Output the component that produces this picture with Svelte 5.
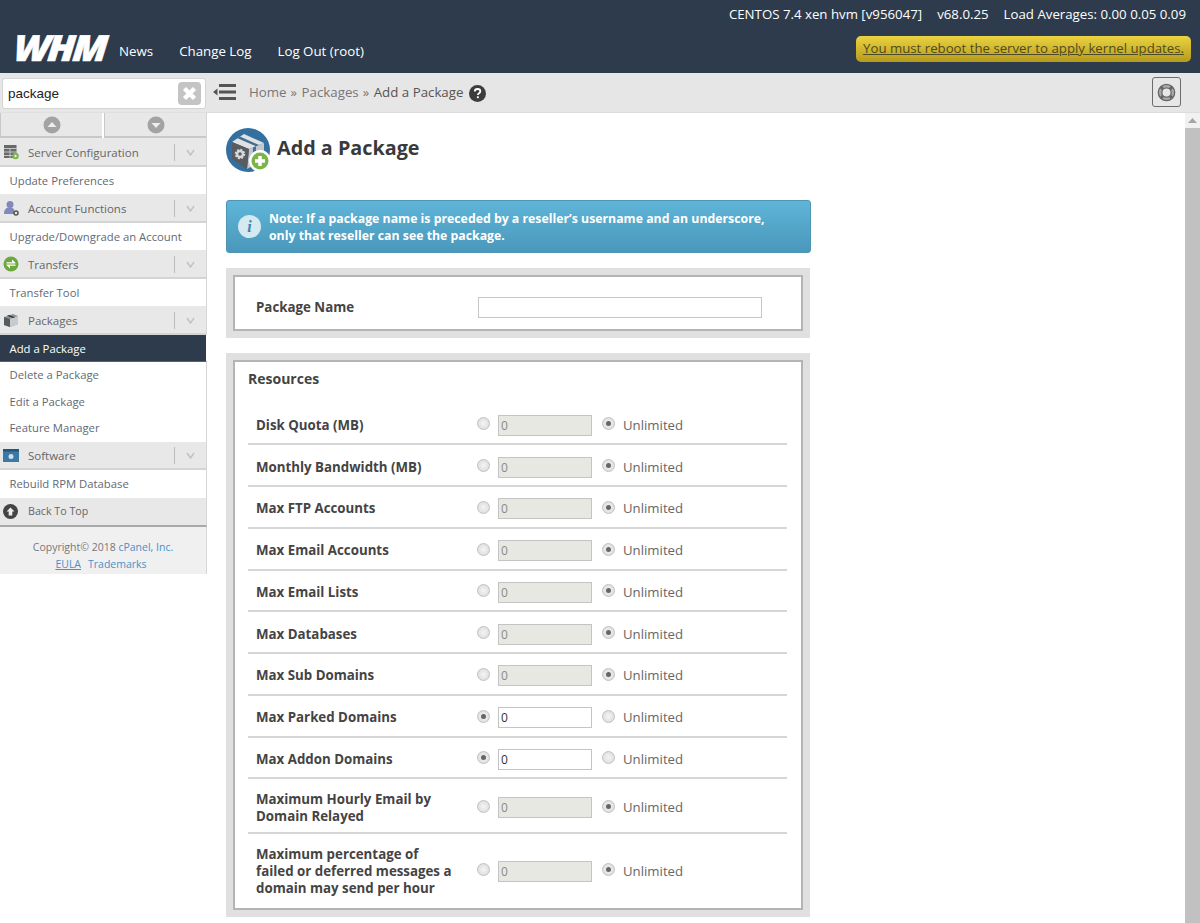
<script>
  const groups = [
    { name: 'Server Configuration', icon: 'server', items: ['Update Preferences'] },
    { name: 'Account Functions', icon: 'account', items: ['Upgrade/Downgrade an Account'] },
    { name: 'Transfers', icon: 'transfers', items: ['Transfer Tool'] },
    { name: 'Packages', icon: 'packages', items: ['Add a Package', 'Delete a Package', 'Edit a Package', 'Feature Manager'] },
    { name: 'Software', icon: 'software', items: ['Rebuild RPM Database'] }
  ];

  const resources = [
    { label: 'Disk Quota (MB)', unlimited: true },
    { label: 'Monthly Bandwidth (MB)', unlimited: true },
    { label: 'Max FTP Accounts', unlimited: true },
    { label: 'Max Email Accounts', unlimited: true },
    { label: 'Max Email Lists', unlimited: true },
    { label: 'Max Databases', unlimited: true },
    { label: 'Max Sub Domains', unlimited: true },
    { label: 'Max Parked Domains', unlimited: false },
    { label: 'Max Addon Domains', unlimited: false },
    { label: 'Maximum Hourly Email by Domain Relayed', unlimited: true, size: 'two' },
    { label: 'Maximum percentage of failed or deferred messages a domain may send per hour', unlimited: true, size: 'three' }
  ];
</script>

<div class="page">
  <header class="top">
    <div class="server-info">
      <span>CENTOS 7.4 xen hvm [v956047]</span>
      <span>v68.0.25</span>
      <span>Load Averages: 0.00 0.05 0.09</span>
    </div>
    <div class="top-main">
      <div class="logo">WHM</div>
      <nav class="top-nav">
        <a href="#news">News</a>
        <a href="#log">Change Log</a>
        <a href="#out">Log Out (root)</a>
      </nav>
      <a class="reboot" href="#reboot">You must reboot the server to apply kernel updates.</a>
    </div>
  </header>

  <div class="body">
    <aside class="side">
      <div class="search">
        <div class="search-box">
          <input type="text" value="package" />
          <span class="clear">
            <svg width="23" height="23" viewBox="0 0 23 23"><rect width="23" height="23" rx="4" fill="#c4c4c4" /><path d="M6.500 6.500l10 10M16.500 6.500l-10 10" stroke="#fff" stroke-width="4.500" /></svg>
          </span>
        </div>
      </div>
      <div class="arrows">
        <button aria-label="Up">
          <svg width="18" height="18" viewBox="0 0 18 18"><circle cx="9" cy="9" r="8.500" fill="#a3a3a3" /><path d="M4.500 11l4.500-5 4.500 5z" fill="#eee" /></svg>
        </button>
        <button aria-label="Down">
          <svg width="18" height="18" viewBox="0 0 18 18"><circle cx="9" cy="9" r="8.500" fill="#a3a3a3" /><path d="M4.500 7l4.500 5 4.500-5z" fill="#eee" /></svg>
        </button>
      </div>

      {#each groups as group}
        <div class="group-head">
          <span class="group-icon">
            {#if group.icon === 'server'}
              <svg width="16" height="16" viewBox="0 0 16 16"><rect x="1" y="1" width="12.500" height="13" fill="#666a69" /><path d="M1 4.500h12.500M1 8h12.500M1 11.500h12.500M7 4.500v10" stroke="#dcdcdc" stroke-width=".8" /><circle cx="12.500" cy="12" r="3.300" fill="#7cb54a" /><circle cx="12.500" cy="12" r="1.200" fill="#e8e8e8" /></svg>
            {:else if group.icon === 'account'}
              <svg width="16" height="16" viewBox="0 0 16 16"><circle cx="7" cy="4.500" r="3.500" fill="#8189bb" /><path d="M1 14c0-5 2-6.500 6-6.500 2 0 3 .5 4 2V14z" fill="#8189bb" /><circle cx="13" cy="13" r="2" fill="none" stroke="#555" stroke-width="1.500" /></svg>
            {:else if group.icon === 'transfers'}
              <svg width="16" height="16" viewBox="0 0 16 16"><circle cx="8" cy="8" r="7.500" fill="#6da83c" /><path d="M3.500 6.300h5.500V3.500l3.500 3.300v.8h-9zM12.500 9.700H7v2.800L3.500 9.200v-.8h9z" fill="#fff" /></svg>
            {:else if group.icon === 'packages'}
              <svg width="16" height="16" viewBox="0 0 16 16"><path d="M1 5l9-3 5 2v8l-8 3-6-2z" fill="#8f9599" /><path d="M7 7l8-3v8l-8 3z" fill="#c8cbcd" /><path d="M1 5l6 2v8l-6-2z" fill="#555a5e" /><path d="M4 3.800l6 2.300 2-.8-6-2.300z" fill="#333" /></svg>
            {:else}
              <svg width="16" height="14" viewBox="0 0 16 14"><rect width="16" height="13" fill="#3a7aa5" /><rect width="16" height="2.500" fill="#24557a" /><circle cx="8" cy="7.500" r="2.500" fill="#cfe0ea" /></svg>
            {/if}
          </span>
          <span class="group-name">{group.name}</span>
          <span class="chev">
            <svg width="9" height="7" viewBox="0 0 9 7"><path d="M1 1l3.500 5L8 1" fill="none" stroke="#c2c2c2" stroke-width="1.500" /></svg>
          </span>
        </div>
        {#each group.items as item}
          <a class="item" class:active={item === 'Add a Package'} href="#item">{item}</a>
        {/each}
      {/each}

      <div class="back">
        <svg width="15" height="15" viewBox="0 0 15 15"><circle cx="7.500" cy="7.500" r="7.500" fill="#444" /><path d="M3.500 7.500l4-4 4 4H9.300V11.500H5.700V7.500z" fill="#eee" /></svg>
        <span>Back To Top</span>
      </div>
      <div class="side-foot">
        <div>Copyright© 2018 <a href="#cp">cPanel, Inc.</a></div>
        <div class="legal"><a class="eula" href="#eula">EULA</a><a href="#tm">Trademarks</a></div>
      </div>
    </aside>

    <div class="right">
      <div class="crumbs">
        <svg class="menu-toggle" width="23" height="16" viewBox="0 0 23 16"><path d="M6 1.500h17M6 8h17M6 14.500h17" stroke="#555" stroke-width="3" /><path d="M0 8l4.500-3.500v7z" fill="#555" /></svg>
        <span class="crumb">Home</span><span class="sep">»</span>
        <span class="crumb">Packages</span><span class="sep">»</span>
        <span class="crumb current">Add a Package</span>
        <svg class="help" width="17" height="17" viewBox="0 0 17 17"><circle cx="8.500" cy="8.500" r="8.500" fill="#3d3d3d" /><path d="M5.800 6.500c0-1.700 1.200-2.500 2.700-2.500s2.800.9 2.800 2.300c0 2-2.400 1.900-2.400 3.700" fill="none" stroke="#fff" stroke-width="1.800" /><rect x="7.900" y="11.300" width="1.900" height="1.900" fill="#fff" /></svg>
        <button class="support" aria-label="Support">
          <svg width="19" height="19" viewBox="0 0 19 19">
            <circle cx="9.500" cy="9.500" r="6.500" fill="none" stroke="#a9a9a9" stroke-width="3" />
            <circle cx="9.500" cy="9.500" r="8.200" fill="none" stroke="#666" stroke-width="1.300" />
            <circle cx="9.500" cy="9.500" r="4.700" fill="none" stroke="#666" stroke-width="1.300" />
            <path d="M3.700 3.700l2.500 2.500M15.300 3.700l-2.500 2.500M3.700 15.300l2.500-2.500M15.300 15.300l-2.500-2.500" stroke="#666" stroke-width="3" />
          </svg>
        </button>
      </div>

      <div class="scroller">
        <main class="content">
          <div class="title-row">
            <svg width="46" height="46" viewBox="0 0 46 46">
              <circle cx="22" cy="22" r="22" fill="#33709f" />
              <path d="M6 14l12-8 20 9-15 6z" fill="#dfe1e2" />
              <path d="M23 21l-2 20 17-9V15z" fill="#c5c8ca" />
              <path d="M6 14v17l15 10 2-20z" fill="#585c60" />
              <path d="M11.500 10.300l2.500-1.700 19 8.500-3 1.200zM27 19.500l3-1.200-.5 19-3 1.600z" fill="#3f6f93" />
              <circle cx="14" cy="26" r="3" fill="none" stroke="#d8d8d8" stroke-width="2.500" />
              <circle cx="14" cy="26" r="4.500" fill="none" stroke="#d8d8d8" stroke-width="1.500" stroke-dasharray="2 1.500" />
              <circle cx="34" cy="33" r="11" fill="#fff" />
              <circle cx="34" cy="33" r="8.500" fill="#7cb44a" />
              <path d="M34 28v10M29 33h10" stroke="#fff" stroke-width="3.500" />
            </svg>
            <h1>Add a Package</h1>
          </div>

          <div class="note">
            <span class="note-icon">i</span>
            <p>Note: If a package name is preceded by a reseller’s username and an underscore, only that reseller can see the package.</p>
          </div>

          <section class="panel">
            <div class="panel-inner name-row">
              <label for="pkg">Package Name</label>
              <input id="pkg" class="pkg-input" type="text" />
            </div>
          </section>

          <section class="panel">
            <div class="panel-inner resources">
              <h2>Resources</h2>
              {#each resources as row}
                <div class="res-row {row.size ?? ''}">
                  <div class="res-label">{row.label}</div>
                  <span class="radio" class:on={!row.unlimited}></span>
                  <input class="num" type="text" value="0" disabled={row.unlimited} />
                  <span class="radio" class:on={row.unlimited}></span>
                  <span class="unl">Unlimited</span>
                </div>
              {/each}
            </div>
          </section>
        </main>
        <div class="scrollbar">
          <div class="up"><svg width="9" height="5" viewBox="0 0 9 5"><path d="M0 5l4.500-5L9 5z" fill="#a5a5a5" /></svg></div>
          <div class="thumb"></div>
        </div>
      </div>
    </div>
  </div>
</div>

<style>
  :global(body) {
    margin: 0;
    background: #fff;
  }

  .page {
    width: 1200px;
    height: 923px;
    overflow: hidden;
    display: flex;
    flex-direction: column;
    font-family: 'Open Sans', sans-serif;
    color: #555;
  }

  a {
    text-decoration: none;
  }

  .top {
    height: 73px;
    flex: none;
    background: #2d3b4c;
    color: #fff;
    box-sizing: border-box;
    padding-top: 5px;
  }

  .server-info {
    display: flex;
    justify-content: flex-end;
    gap: 15px;
    padding-right: 14px;
    font-size: 13.250px;
    line-height: 19px;
  }

  .top-main {
    display: flex;
    align-items: flex-start;
    padding: 8px 9px 0 14px;
  }

  .logo {
    font: italic 800 36px/36px 'Open Sans', sans-serif;
    letter-spacing: -2.500px;
    width: 97px;
    transform: scaleX(1.080) skewX(-4deg);
    transform-origin: left center;
    margin-top: -2px;
    -webkit-text-stroke: 0.6px #fff;
  }

  .top-nav {
    display: flex;
    gap: 26px;
    margin: 10px 0 0 8px;
    font-size: 13.300px;
    line-height: 19px;
  }

  .top-nav a {
    color: #fff;
  }

  .reboot {
    margin-left: auto;
    margin-top: 4px;
    height: 26px;
    box-sizing: border-box;
    padding: 0 7px;
    border-radius: 5px;
    background: linear-gradient(#ebd341, #b59a1c);
    color: #4e4a22;
    font-size: 13.220px;
    line-height: 25px;
    text-decoration: underline;
    white-space: nowrap;
  }

  .body {
    flex: 1;
    display: flex;
    min-height: 0;
  }

  .side {
    width: 207px;
    flex: none;
    background: #fff;
  }

  .search {
    height: 40px;
    background: #e6e6e6;
    box-sizing: border-box;
    padding: 5px 1px 4px 2px;
    border-bottom: 1px solid #e0e0e0;
  }

  .search-box {
    height: 31px;
    box-sizing: border-box;
    background: #fff;
    border: 1px solid #d4d4d4;
    border-radius: 3px;
    display: flex;
    align-items: center;
    padding: 0 4px 0 5px;
  }

  .search-box input {
    flex: 1;
    min-width: 0;
    border: 0;
    outline: 0;
    padding: 0;
    background: none;
    font: 13.500px 'Liberation Sans', sans-serif;
    color: #222;
  }

  .clear {
    display: flex;
  }

  .arrows {
    display: flex;
    height: 25px;
    gap: 2px;
    background: #fff;
    border-right: 1px solid #d6d6d6;
  }

  .arrows button {
    flex: 1;
    padding: 0;
    border: 0;
    border-left: 1px solid #c8c8c8;
    border-bottom: 2px solid #c8c8c8;
    background: #e8e8e8;
    display: flex;
    align-items: center;
    justify-content: center;
  }

  .group-head {
    height: 28.500px;
    box-sizing: border-box;
    display: flex;
    align-items: center;
    background: #e8e8e8;
    border-bottom: 2px solid #d4d4d4;
    border-right: 1px solid #d6d6d6;
    padding: 2px 0 0 3px;
  }

  .group-icon {
    width: 25px;
    flex: none;
    display: flex;
  }

  .group-name {
    flex: 1;
    font-size: 11.500px;
    color: #666;
  }

  .chev {
    width: 32px;
    height: 17px;
    border-left: 1px solid #bcbcbc;
    display: flex;
    align-items: center;
    justify-content: center;
    box-sizing: border-box;
  }

  .item {
    display: block;
    height: 26.500px;
    box-sizing: border-box;
    padding-left: 9.500px;
    font-size: 11.300px;
    line-height: 26.500px;
    color: #5f6a75;
    border-right: 1px solid #d6d6d6;
  }

  .group-head + .item {
    height: 27.500px;
    line-height: 28.500px;
  }

  .item.active {
    background: #2d3b4c;
    color: #fff;
    border-bottom: 1px solid #55636f;
    border-right: 1px solid #fff;
  }

  .back {
    height: 29px;
    box-sizing: border-box;
    display: flex;
    align-items: center;
    gap: 10px;
    padding-left: 3px;
    background: #e8e8e8;
    border-bottom: 2px solid #a8a8a8;
    border-right: 1px solid #d6d6d6;
    font-size: 10.700px;
    color: #666;
  }

  .side-foot {
    height: 47px;
    box-sizing: border-box;
    padding-top: 12px;
    background: #f0f0f0;
    border-right: 1px solid #d6d6d6;
    text-align: center;
    font-size: 10.500px;
    line-height: 17px;
    color: #777;
  }

  .side-foot a {
    color: #4a90c8;
  }

  .legal {
    display: flex;
    justify-content: center;
    gap: 7px;
    padding-right: 4px;
  }

  .eula {
    text-decoration: underline;
  }

  .right {
    flex: 1;
    min-width: 0;
    display: flex;
    flex-direction: column;
  }

  .crumbs {
    height: 40px;
    flex: none;
    box-sizing: border-box;
    background: #e6e6e6;
    border-bottom: 1px solid #dcdcdc;
    display: flex;
    align-items: center;
    padding: 0 19px 1px 6px;
    font-size: 13.300px;
    color: #777;
  }

  .menu-toggle {
    margin-right: 13px;
  }

  .sep {
    margin: 0 4.500px 0 4px;
    font-size: 13px;
  }

  .current {
    color: #555;
  }

  .help {
    margin-left: 6px;
    margin-top: 2px;
  }

  .support {
    margin-left: auto;
    width: 29px;
    height: 30px;
    padding: 0;
    border: 1px solid #6b6b6b;
    border-radius: 3px;
    background: #e6e6e6;
    display: flex;
    align-items: center;
    justify-content: center;
  }

  .scroller {
    flex: 1;
    min-height: 0;
    display: flex;
  }

  .content {
    flex: 1;
    min-width: 0;
    box-sizing: border-box;
    padding: 15px 0 0 19px;
  }

  .title-row {
    display: flex;
    align-items: center;
    gap: 5px;
    height: 46px;
  }

  h1 {
    margin: 0 0 7px;
    font-size: 19.800px;
    font-weight: 700;
    color: #3a3a3a;
    line-height: 27px;
  }

  .note {
    width: 585px;
    height: 53px;
    box-sizing: border-box;
    margin-top: 26px;
    display: flex;
    align-items: center;
    gap: 8px;
    padding: 0 30px 0 11px;
    border: 1px solid #4d94b5;
    border-radius: 3px;
    background: linear-gradient(#5fb5d8, #4a98bb);
  }

  .note p {
    margin: 0;
    font-size: 12.300px;
    font-weight: 700;
    line-height: 17px;
    color: #fff;
  }

  .note-icon {
    width: 23px;
    height: 23px;
    flex: none;
    border-radius: 50%;
    background: #d5e9f1;
    color: #3f86a8;
    font: italic 700 16px/23px 'Liberation Serif', serif;
    text-align: center;
  }

  .panel {
    width: 584px;
    box-sizing: border-box;
    padding: 7px;
    background: #e0e0e0;
    margin-top: 15px;
  }

  .panel-inner {
    background: #fff;
    border: 2px solid #b4b4b4;
    box-sizing: border-box;
  }

  .name-row {
    height: 56px;
    display: flex;
    align-items: center;
    padding: 9px 0 0 21px;
  }

  .name-row label,
  .res-label {
    font-size: 13.300px;
    font-weight: 700;
    color: #444;
    line-height: 17px;
  }

  .name-row label {
    width: 222px;
  }

  .pkg-input {
    width: 284px;
    height: 21px;
    box-sizing: border-box;
    border: 1px solid #c8c8c8;
    background: #fff;
    padding: 0;
  }

  .resources {
    height: 550px;
    padding: 0 14px 0 13px;
    overflow: hidden;
  }

  h2 {
    margin: 0;
    font-size: 14px;
    font-weight: 700;
    color: #444;
    height: 41.500px;
    line-height: 33px;
  }

  .res-row {
    height: 41.750px;
    box-sizing: border-box;
    display: flex;
    align-items: center;
    border-bottom: 2px solid #d6d6d6;
    padding-top: 4px;
  }

  .res-row.two {
    height: 55px;
  }

  .res-row.three {
    height: 74px;
    border-bottom: 0;
    padding-top: 0;
  }

  .res-label {
    width: 229px;
    flex: none;
    box-sizing: border-box;
    padding: 0 24px 0 8px;
  }

  .radio {
    width: 13px;
    height: 13px;
    box-sizing: border-box;
    flex: none;
    border-radius: 50%;
    border: 1px solid #c0c0c0;
    background: radial-gradient(#f4f4f4, #d8d8d8);
    margin-top: -3px;
    position: relative;
  }

  .radio.on::after {
    content: '';
    position: absolute;
    left: 3px;
    top: 3px;
    width: 5px;
    height: 5px;
    border-radius: 50%;
    background: #666;
  }

  .num {
    width: 94px;
    height: 21px;
    box-sizing: border-box;
    margin: 0 10px 0 8px;
    padding: 0 2px;
    border: 1px solid #c4c4c4;
    background: #fff;
    font: 12px 'Open Sans', sans-serif;
    color: #333;
  }

  .num:disabled {
    background: #e8e8e2;
    color: #888;
  }

  .unl {
    margin-left: 8px;
    font-size: 13.200px;
    color: #666;
    margin-top: -1px;
  }

  .scrollbar {
    width: 15px;
    flex: none;
    background: #f1f1f1;
  }

  .up {
    height: 15px;
    display: flex;
    align-items: center;
    justify-content: center;
  }

  .thumb {
    height: 795px;
    background: #c1c1c1;
  }
</style>
